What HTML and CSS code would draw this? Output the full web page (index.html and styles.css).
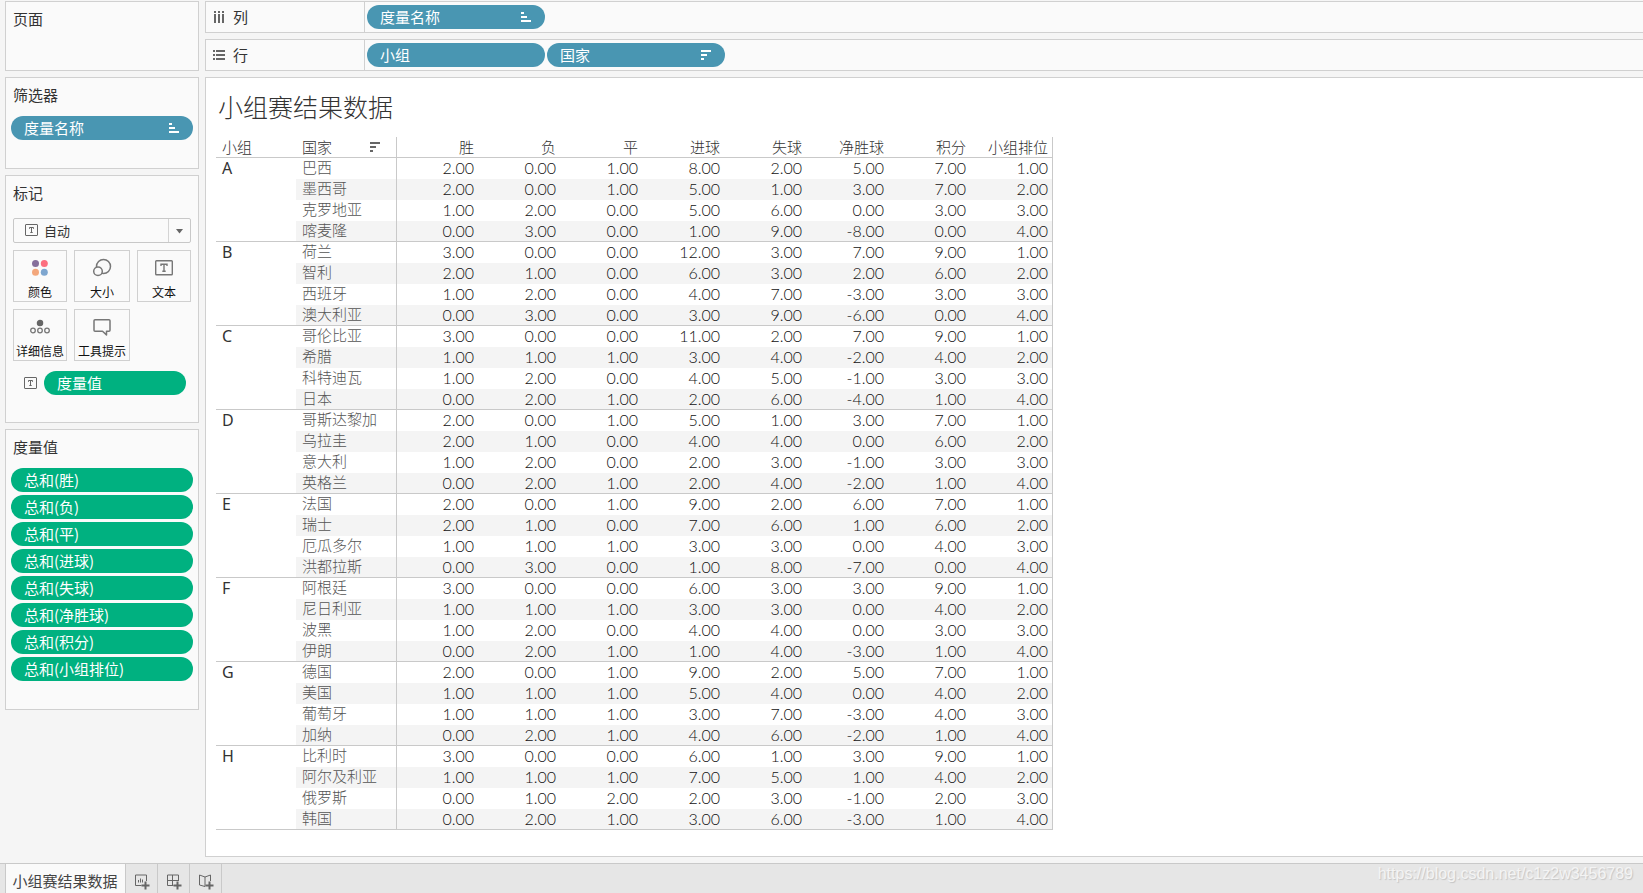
FILE: index.html
```html
<!DOCTYPE html>
<html lang="zh-CN">
<head>
<meta charset="utf-8">
<title>小组赛结果数据</title>
<link rel="stylesheet" href="styles.css">
</head>
<body>
<svg class="defs" aria-hidden="true">
  <symbol id="sort-asc" viewBox="0 0 10 10"><path d="M0 0h3v2H0zM0 4h6v2H0zM0 8h10v2H0z" fill="currentColor"/></symbol>
  <symbol id="sort-desc" viewBox="0 0 10 10"><path d="M0 0h10v2H0zM0 4h6v2H0zM0 8h3v2H0z" fill="currentColor"/></symbol>
  <symbol id="text-mark" viewBox="0 0 13 12"><rect x=".5" y=".5" width="12" height="11" rx=".5" fill="none" stroke="currentColor"/><path d="M4.5 4.8V3.5h4v1.3M6.5 3.5v5M5.3 8.5h2.4" fill="none" stroke="currentColor"/></symbol>
</svg>

<div class="workspace">
  <aside class="side">
    <section class="panel panel-pages"><h2>页面</h2></section>
    <section class="panel panel-filters">
      <h2>筛选器</h2>
      <button class="pill pill-dim">度量名称<svg class="sort"><use href="#sort-asc"/></svg></button>
    </section>
    <section class="panel panel-marks">
      <h2>标记</h2>
      <div class="marks">
        <div class="mark-type">
          <svg class="text-icon"><use href="#text-mark"/></svg>
          <select aria-label="标记类型"><option>自动</option></select>
          <svg class="caret" viewBox="0 0 7 5"><path d="M0 0h7L3.5 4.5z" fill="#666"/></svg>
        </div>
        <div class="cards">
          <button class="card">
            <svg viewBox="0 0 20 20"><circle cx="5.5" cy="5.5" r="3.5" fill="#866f9b"/><circle cx="14.3" cy="5.5" r="3.5" fill="#fc6f7f"/><circle cx="5.5" cy="14.3" r="3.5" fill="#f3a77c"/><circle cx="14.3" cy="14.3" r="3.5" fill="#7ea6cf"/></svg>
            <span>颜色</span>
          </button>
          <button class="card">
            <svg viewBox="0 0 20 20" fill="none" stroke="#777" stroke-width="1.5"><circle cx="11.5" cy="8.5" r="7"/><circle cx="6" cy="13.2" r="4.3" fill="#fafafa"/></svg>
            <span>大小</span>
          </button>
          <button class="card">
            <svg viewBox="0 0 20 20" fill="none" stroke="#777" stroke-width="1.4"><rect x="1.7" y="2.7" width="16.6" height="14" rx=".8"/><path d="M7 8V6.2h6V8M10 6.2v7M8.3 13.2h3.4"/></svg>
            <span>文本</span>
          </button>
          <button class="card">
            <svg viewBox="0 0 20 20" fill="none" stroke="#777" stroke-width="1.3"><circle cx="10" cy="6" r="2.6" fill="#666" stroke="#666"/><circle cx="3" cy="13.5" r="2.3"/><circle cx="10" cy="13.5" r="2.3"/><circle cx="17" cy="13.5" r="2.3"/></svg>
            <span>详细信息</span>
          </button>
          <button class="card">
            <svg viewBox="0 0 20 20" fill="none" stroke="#777" stroke-width="1.5" stroke-linejoin="round"><path d="M3 2.7h14q1 0 1 1v9.600q0 1-1 1h-2.500v3.600l-4-3.600H3q-1 0-1-1V3.700q0-1 1-1z"/></svg>
            <span>工具提示</span>
          </button>
        </div>
        <div class="mark-row">
          <svg class="text-icon"><use href="#text-mark"/></svg>
          <button class="pill pill-measure">度量值</button>
        </div>
      </div>
    </section>
    <section class="panel panel-values">
      <h2>度量值</h2>
      <button class="pill pill-measure">总和(胜)</button>
      <button class="pill pill-measure">总和(负)</button>
      <button class="pill pill-measure">总和(平)</button>
      <button class="pill pill-measure">总和(进球)</button>
      <button class="pill pill-measure">总和(失球)</button>
      <button class="pill pill-measure">总和(净胜球)</button>
      <button class="pill pill-measure">总和(积分)</button>
      <button class="pill pill-measure">总和(小组排位)</button>
    </section>
  </aside>

  <main class="main">
    <section class="shelf">
      <h2><svg viewBox="0 0 12 12" fill="#666"><path d="M1 0h2v2H1zM5 0h2v2H5zM9 0h2v2H9zM1 3h2v9H1zM5 3h2v9H5zM9 3h2v9H9z"/></svg>列</h2>
      <div class="drop">
        <button class="pill pill-dim">度量名称<svg class="sort"><use href="#sort-asc"/></svg></button>
      </div>
    </section>
    <section class="shelf">
      <h2><svg viewBox="0 0 12 12" fill="#666"><path d="M0 1h2v2H0zM0 5h2v2H0zM0 9h2v2H0zM3 1h9v2H3zM3 5h9v2H3zM3 9h9v2H3z"/></svg>行</h2>
      <div class="drop">
        <button class="pill pill-dim">小组</button>
        <button class="pill pill-dim">国家<svg class="sort"><use href="#sort-desc"/></svg></button>
      </div>
    </section>
    <section class="sheet">
      <h1>小组赛结果数据</h1>
      <table class="crosstab">
        <colgroup><col class="col-group"><col class="col-country"><col span="8" class="col-value"></colgroup>
        <thead>
          <tr>
            <th class="group-head">小组</th>
            <th class="country-head"><div>国家<svg class="sort"><use href="#sort-desc"/></svg></div></th>
            <th>胜</th><th>负</th><th>平</th><th>进球</th><th>失球</th><th>净胜球</th><th>积分</th><th>小组排位</th>
          </tr>
        </thead>
      </table>
    </section>
  </main>
</div>

<footer class="tabs">
  <button class="tab tab-active">小组赛结果数据</button>
  <button class="tab tab-new" aria-label="新建工作表"><svg viewBox="0 0 16 16" fill="none" stroke="#666"><path d="M7.500 11.500h-6v-10.500h11v6M4.500 6v2.500M6.500 4.500v4M8.500 5.500v3"/><path d="M11.500 7.500v8M7.500 11.500h8" stroke-width="2"/></svg></button>
  <button class="tab tab-new" aria-label="新建仪表板"><svg viewBox="0 0 16 16" fill="none" stroke="#666"><path d="M7.500 11.500h-6v-10.500h11v6M1.500 6.500h11M6.500 1v10.500"/><path d="M11.500 7.500v8M7.500 11.500h8" stroke-width="2"/></svg></button>
  <button class="tab tab-new" aria-label="新建故事"><svg viewBox="0 0 16 16" fill="none" stroke="#666"><path d="M7 12.500l-5.500-1.500V1L7 3l5.500-2v6M7 3v9.500"/><path d="M11.500 7.500v8M7.500 11.500h8" stroke-width="2"/></svg></button>
  <span class="credit">https://blog.csdn.net/c1z2w3456789</span>
</footer>
<script src="table.js"></script>
</body>
</html>
```

FILE: styles.css
```css
* { box-sizing: border-box; }

body {
  margin: 0;
  min-height: 100vh;
  display: flex;
  flex-direction: column;
  background: #f5f5f5;
  color: #333;
  font-family: "Noto Sans CJK SC", sans-serif;
  font-size: 15px;
  line-height: 22px;
}

h1, h2 { margin: 0; font-weight: 400; }
h2 { font-size: 15px; }
button, select { font: inherit; color: inherit; }
button { margin: 0; border: 0; padding: 0; }
svg { flex: none; }
.defs { display: none; }

.workspace { flex: 1; display: flex; gap: 6px; padding: 1px 0 6px 5px; }

/* Side panels */
.side { width: 194px; flex: none; display: flex; flex-direction: column; gap: 6px; }
.panel { border: 1px solid #d0d0d0; background: #fafafa; padding: 6px 5px 0; }
.panel h2 { padding-left: 2px; }
.panel-pages { min-height: 70px; }
.panel-filters { padding-bottom: 28px; }
.panel-filters h2 { margin-bottom: 10px; }
.panel-marks { padding-bottom: 27px; }
.panel-marks h2 { margin-bottom: 14px; }
.panel-values { padding-bottom: 28px; display: flex; flex-direction: column; gap: 3px; }
.panel-values h2 { margin-bottom: 7px; }

.pill {
  display: flex;
  align-items: center;
  justify-content: space-between;
  width: 100%;
  height: 24px;
  padding: 0 14px 0 13px;
  border-radius: 12px;
  color: #fff;
  text-align: left;
}
.pill-dim { background: #4996b2; }
.pill-measure { background: #00b180; }
.sort { width: 10px; height: 10px; }
.text-icon { width: 13px; height: 12px; color: #666; }

.marks { padding: 0 2px; }
.mark-type { position: relative; }
.mark-type select {
  display: block;
  appearance: none;
  width: 100%;
  height: 25px;
  padding: 0 30px 0 30px;
  border: 1px solid #c8c8c8;
  border-radius: 2px;
  background: linear-gradient(#d4d4d4, #d4d4d4) right 21px top / 1px 100% no-repeat #fafafa;
  font-size: 13px;
}
.mark-type .text-icon { position: absolute; left: 12px; top: 6px; }
.caret { position: absolute; right: 8px; top: 11px; width: 7px; height: 5px; }

.cards { display: grid; grid-template-columns: 54fr 56fr 54fr; gap: 7px; margin-top: 7px; }
.card {
  height: 52px;
  border: 1px solid #d0d0d0;
  background: #fafafa;
  color: #111;
  font-size: 12px;
  line-height: 18px;
  white-space: nowrap;
  display: flex;
  flex-direction: column;
  align-items: center;
  justify-content: flex-end;
  gap: 5px;
}
.card svg { width: 20px; height: 20px; }
.mark-row { display: flex; align-items: center; gap: 7px; margin-top: 10px; padding: 0 5px 0 11px; }
.mark-row .pill { flex: 1; }

/* Shelves */
.main { flex: 1; min-width: 0; display: flex; flex-direction: column; gap: 6px; }
.shelf { display: flex; height: 32px; border: 1px solid #d0d0d0; border-right: 0; background: #fafafa; }
.shelf h2 { width: 159px; border-right: 1px solid #d0d0d0; padding-left: 7px; display: flex; align-items: center; gap: 8px; }
.shelf h2 svg { width: 12px; height: 12px; }
.drop { display: flex; align-items: center; gap: 2px; padding-left: 2px; }
.drop .pill { width: 178px; }

/* Sheet */
.sheet { flex: 1; border: 1px solid #d0d0d0; border-right: 0; background: #fff; padding: 10px 10px; }
.sheet h1 { padding-left: 2px; margin-bottom: 13px; font-size: 25px; line-height: 36px; font-weight: 300; }

.crosstab { width: 837px; table-layout: fixed; border-collapse: separate; border-spacing: 0; }
.col-group { width: 80px; }
.col-country { width: 101px; }
.col-value { width: 82px; }
.crosstab th, .crosstab td {
  height: 21px;
  padding: 0 5px 0 0;
  line-height: 20px;
  font-weight: 300;
  text-align: right;
  vertical-align: top;
  white-space: nowrap;
}
.crosstab thead th { border-bottom: 1px solid #c9c9c9; color: #333; }
.crosstab .group-head, .crosstab .group, .crosstab .country-head, .crosstab .country { text-align: left; padding-left: 6px; }
.country-head div { display: flex; align-items: center; justify-content: space-between; padding-right: 11px; }
.country-head .sort { color: #666; }
.crosstab .country-head, .crosstab .country { border-right: 1px solid #c9c9c9; }
.crosstab .country { color: #555; line-height: 18px; }
.crosstab .group { border-bottom: 1px solid #c9c9c9; font-family: "Noto Sans", sans-serif; font-size: 16px; font-weight: 400; }
.crosstab td { font-family: Lato, sans-serif; font-size: 16px; color: #111; }
.crosstab th:last-child, .crosstab td:last-child { border-right: 1px solid #c9c9c9; padding-right: 4px; }
.crosstab tr:nth-child(even) .country, .crosstab tr:nth-child(even) td { background: #f4f4f4; }
.crosstab tr:last-child .country, .crosstab tr:last-child td { border-bottom: 1px solid #c9c9c9; }

/* Tab strip */
.tabs { display: flex; height: 30px; padding-left: 5px; border-top: 1px solid #c9c9c9; background: #e6e6e6; }
.tab { display: flex; align-items: center; justify-content: center; border-right: 1px solid #c9c9c9; background: #e6e6e6; color: #444; }
.tab-active { width: 121px; padding: 4px 1px 0 0; border-left: 1px solid #c9c9c9; background: #fafafa; }
.tab-new { width: 32px; padding-top: 6px; }
.tab-new svg { width: 16px; height: 16px; }
.credit { margin-left: auto; padding-right: 10px; font-family: "Liberation Sans", Arial, sans-serif; font-size: 16px; line-height: 20px; color: #f4f4f4; text-shadow: 1px 1px 1px #c4c4c4; }
```

FILE: table.js
```js
const groups = {
  A: [["巴西", 2, 0, 1, 8, 2, 5, 7], ["墨西哥", 2, 0, 1, 5, 1, 3, 7], ["克罗地亚", 1, 2, 0, 5, 6, 0, 3], ["喀麦隆", 0, 3, 0, 1, 9, -8, 0]],
  B: [["荷兰", 3, 0, 0, 12, 3, 7, 9], ["智利", 2, 1, 0, 6, 3, 2, 6], ["西班牙", 1, 2, 0, 4, 7, -3, 3], ["澳大利亚", 0, 3, 0, 3, 9, -6, 0]],
  C: [["哥伦比亚", 3, 0, 0, 11, 2, 7, 9], ["希腊", 1, 1, 1, 3, 4, -2, 4], ["科特迪瓦", 1, 2, 0, 4, 5, -1, 3], ["日本", 0, 2, 1, 2, 6, -4, 1]],
  D: [["哥斯达黎加", 2, 0, 1, 5, 1, 3, 7], ["乌拉圭", 2, 1, 0, 4, 4, 0, 6], ["意大利", 1, 2, 0, 2, 3, -1, 3], ["英格兰", 0, 2, 1, 2, 4, -2, 1]],
  E: [["法国", 2, 0, 1, 9, 2, 6, 7], ["瑞士", 2, 1, 0, 7, 6, 1, 6], ["厄瓜多尔", 1, 1, 1, 3, 3, 0, 4], ["洪都拉斯", 0, 3, 0, 1, 8, -7, 0]],
  F: [["阿根廷", 3, 0, 0, 6, 3, 3, 9], ["尼日利亚", 1, 1, 1, 3, 3, 0, 4], ["波黑", 1, 2, 0, 4, 4, 0, 3], ["伊朗", 0, 2, 1, 1, 4, -3, 1]],
  G: [["德国", 2, 0, 1, 9, 2, 5, 7], ["美国", 1, 1, 1, 5, 4, 0, 4], ["葡萄牙", 1, 1, 1, 3, 7, -3, 4], ["加纳", 0, 2, 1, 4, 6, -2, 1]],
  H: [["比利时", 3, 0, 0, 6, 1, 3, 9], ["阿尔及利亚", 1, 1, 1, 7, 5, 1, 4], ["俄罗斯", 0, 1, 2, 2, 3, -1, 2], ["韩国", 0, 2, 1, 3, 6, -3, 1]],
};

const table = document.querySelector(".crosstab");
for (const [group, teams] of Object.entries(groups)) {
  const body = table.createTBody();
  teams.forEach(([country, ...values], i) => {
    const cells = [...values, i + 1].map((v) => `<td>${v.toFixed(2)}</td>`).join("");
    const head = i === 0 ? `<th class="group" scope="rowgroup" rowspan="${teams.length}">${group}</th>` : "";
    body.insertRow().innerHTML = `${head}<th class="country" scope="row">${country}</th>${cells}`;
  });
}
```
